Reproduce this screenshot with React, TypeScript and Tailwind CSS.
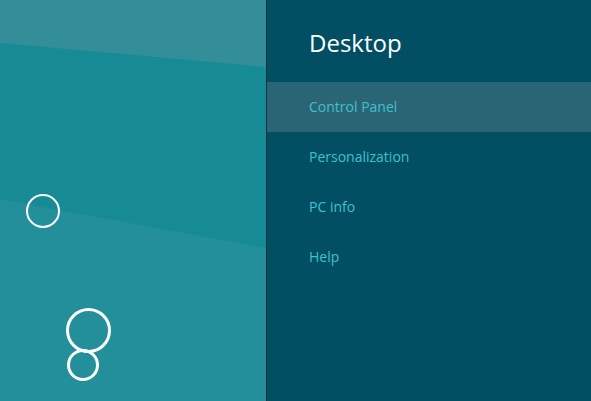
const items = ["Control Panel", "Personalization", "PC info", "Help"];

const Backdrop = () => (
  <div className="relative h-full w-[266px] shrink-0 overflow-hidden">
    <svg className="h-full w-full" viewBox="0 0 266 401" preserveAspectRatio="none">
      <rect width="266" height="401" fill="#168a95" />
      <polygon points="0,0 266,0 266,67 0,43" fill="#338e99" />
      <polygon points="0,199 266,248 266,401 0,401" fill="#228f9b" />
    </svg>
    <div className="absolute left-[26px] top-[194px] h-[34px] w-[34px] rounded-full border-2 border-white" />
    <div className="absolute left-[66px] top-[308px] h-[45px] w-[45px] rounded-full border-[3px] border-white" />
    <div className="absolute left-[67px] top-[349px] h-[32px] w-[32px] rounded-full border-[3px] border-white" />
  </div>
);

export default function App() {
  return (
    <div
      className="flex h-[401px] w-[591px] overflow-hidden"
      style={{ fontFamily: '"Open Sans", "Noto Sans", sans-serif' }}
    >
      <Backdrop />
      <div className="w-px shrink-0 bg-[#0c3440]" />
      <div className="flex flex-1 flex-col bg-[#024e62]">
        <div className="h-[82px] pl-[42px] pt-[28px] text-[24px] leading-[30px] text-white">
          Desktop
        </div>
        {items.map((item, idx) => (
          <div
            key={item}
            className={`flex h-[50px] items-center pb-[2px] pl-[42px] text-[14px] text-[#40c0cf] ${idx === 0 ? "bg-[#2a6576]" : ""}`}
          >
            {item}
          </div>
        ))}
      </div>
    </div>
  );
}
